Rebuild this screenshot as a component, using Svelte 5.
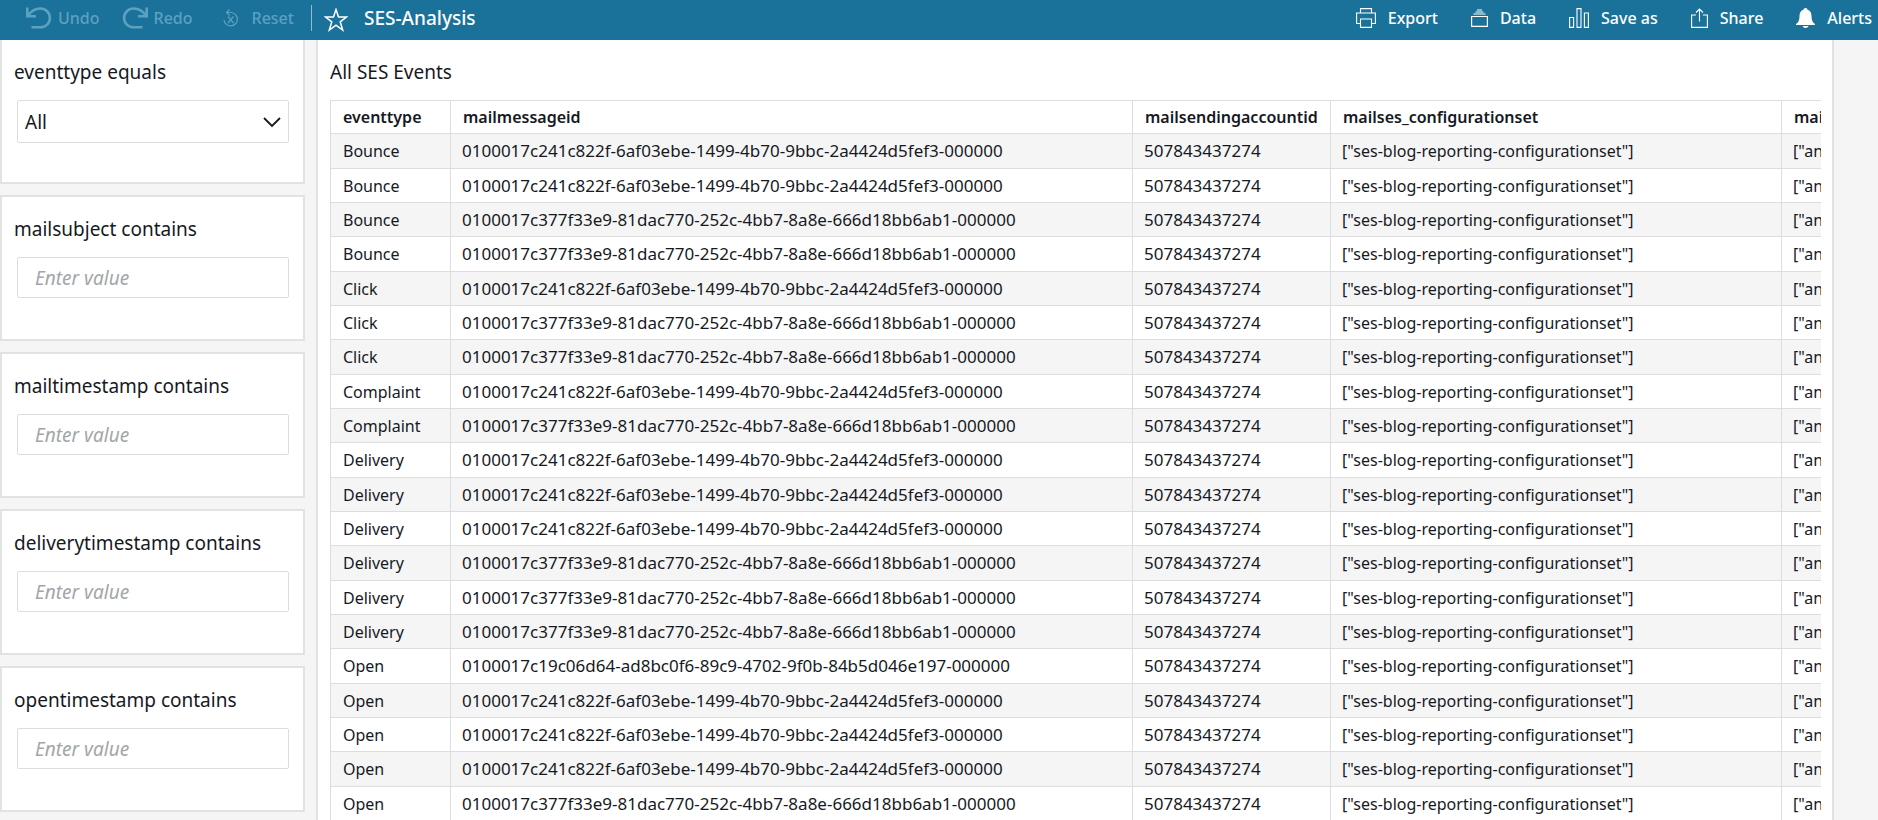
<script lang="ts">
  const filters = ['mailsubject', 'mailtimestamp', 'deliverytimestamp', 'opentimestamp'];

  const columns = [
    'eventtype',
    'mailmessageid',
    'mailsendingaccountid',
    'mailses_configurationset',
    'mailses_caller_identity',
  ];

  const ID_A = '0100017c241c822f-6af03ebe-1499-4b70-9bbc-2a4424d5fef3-000000';
  const ID_B = '0100017c377f33e9-81dac770-252c-4bb7-8a8e-666d18bb6ab1-000000';
  const ID_C = '0100017c19c06d64-ad8bc0f6-89c9-4702-9f0b-84b5d046e197-000000';

  const account = '507843437274';
  const configSet = '["ses-blog-reporting-configurationset"]';
  const caller = '["anonymous"]';

  const events: [string, string][] = [
    ['Bounce', ID_A],
    ['Bounce', ID_A],
    ['Bounce', ID_B],
    ['Bounce', ID_B],
    ['Click', ID_A],
    ['Click', ID_B],
    ['Click', ID_B],
    ['Complaint', ID_A],
    ['Complaint', ID_B],
    ['Delivery', ID_A],
    ['Delivery', ID_A],
    ['Delivery', ID_A],
    ['Delivery', ID_B],
    ['Delivery', ID_B],
    ['Delivery', ID_B],
    ['Open', ID_C],
    ['Open', ID_A],
    ['Open', ID_A],
    ['Open', ID_A],
    ['Open', ID_B],
  ];

  let eventType = $state('All');
  let values = $state<Record<string, string>>({});
  let starred = $state(false);
</script>

<div class="app">
  <!-- ── Toolbar ── -->
  <header class="toolbar">
    <div class="group history">
      <button class="tool" disabled>
        <svg width="26" height="22" viewBox="0 0 26 22" fill="none" stroke="currentColor" stroke-width="2.6">
          <path d="M1.300 .5v8.700H10M2 9C5 4 9 1.500 14.500 1.500a9.400 9.400 0 0 1 0 18.800H5.500" />
        </svg>
        Undo
      </button>
      <button class="tool" disabled>
        <svg width="26" height="22" viewBox="0 0 26 22" fill="none" stroke="currentColor" stroke-width="2.6">
          <path d="M24.700 .5v8.700H16M24 9C21 4 17 1.500 11.500 1.500a9.400 9.400 0 0 0 0 18.800h9" />
        </svg>
        Redo
      </button>
      <button class="tool reset" disabled>
        <svg width="16" height="18" viewBox="0 0 16 18" fill="none" stroke="currentColor" stroke-width="1.2">
          <path d="M6.500 .5L3.500 3.500l3 3M3.500 3.500H8a6.700 6.700 0 1 1-7 7.500M5 7.500l5.500 6.500M10.500 7.500L5 14" />
        </svg>
        Reset
      </button>
    </div>
    <div class="group title-group">
      <button class="star" aria-label="Favorite" aria-pressed={starred} onclick={() => (starred = !starred)}>
        <svg width="24" height="24" viewBox="0 0 24 24" fill={starred ? 'currentColor' : 'none'} stroke="currentColor" stroke-width="1.5">
          <path d="M12 1.500l2.500 7.500h8l-6.300 4.800 2.500 8.200L12 17.200 5.300 22l2.500-8.200L1.500 9h8z" />
        </svg>
      </button>
      <h1>SES-Analysis</h1>
    </div>
    <div class="group actions">
      <button class="tool">
        <svg width="20" height="20" viewBox="0 0 20 20" fill="none" stroke="currentColor" stroke-width="1.1">
          <path d="M4.500 5V.6h11V5M4.500 15.500H.6V5h18.800v10.500h-3.900M4.500 11h11v8.400h-11z" />
        </svg>
        Export
      </button>
      <button class="tool">
        <svg width="17" height="20" viewBox="0 0 17 20" fill="none" stroke="currentColor" stroke-width="1.2">
          <path d="M.6 8.500h15.800v9.900H.6zM2.500 6h12M4.500 4h8M6 2h5" />
        </svg>
        Data
      </button>
      <button class="tool">
        <svg width="20" height="20" viewBox="0 0 20 20" fill="none" stroke="currentColor" stroke-width="1.1">
          <path d="M.6 9.500h4v9.900h-4zM8 .6h4v18.800H8zM15.400 5h4v14.400h-4z" />
        </svg>
        Save as
      </button>
      <button class="tool">
        <svg width="17" height="20" viewBox="0 0 17 20" fill="none" stroke="currentColor" stroke-width="1.1">
          <path d="M5 7H.6v12.400h15.800V7H12M8.500 13.500V1M5 4.500L8.500 1 12 4.500" />
        </svg>
        Share
      </button>
      <button class="tool">
        <svg width="19" height="20" viewBox="0 0 19 20" fill="currentColor">
          <path d="M9.500 0c1.200 0 2 .8 2 1.700C14.200 2.500 15.500 4.800 15.500 8c0 4 1 6.500 3.500 8v1H0v-1c2.500-1.500 3.500-4 3.500-8 0-3.200 1.300-5.500 4-6.300C7.500.8 8.300 0 9.500 0zM6.500 18h6c-.5 1.300-1.500 2-3 2s-2.500-.7-3-2z" />
        </svg>
        Alerts
      </button>
    </div>
  </header>

  <div class="workspace">
    <!-- ── Filter controls ── -->
    <aside class="filters">
      <section class="card">
        <label for="f-eventtype">eventtype equals</label>
        <div class="select-wrap">
          <select id="f-eventtype" bind:value={eventType}>
            <option>All</option>
            <option>Bounce</option>
            <option>Click</option>
            <option>Complaint</option>
            <option>Delivery</option>
            <option>Open</option>
          </select>
          <svg class="chevron" width="18" height="11" viewBox="0 0 18 11" fill="none" stroke="currentColor" stroke-width="1.8">
            <path d="M1 1l8 8 8-8" />
          </svg>
        </div>
      </section>
      {#each filters as f}
        <section class="card">
          <label for="f-{f}">{f} contains</label>
          <input id="f-{f}" type="text" placeholder="Enter value" bind:value={values[f]} />
        </section>
      {/each}
    </aside>

    <!-- ── Events table ── -->
    <main class="visual">
      <h2>All SES Events</h2>
      <div class="table-clip">
        <table>
          <colgroup>
            <col class="c-type" />
            <col class="c-id" />
            <col class="c-account" />
            <col class="c-config" />
            <col class="c-last" />
          </colgroup>
          <thead>
            <tr>
              {#each columns as c}
                <th scope="col">{c}</th>
              {/each}
            </tr>
          </thead>
          <tbody>
            {#each events as [type, id]}
              <tr>
                <td>{type}</td>
                <td class="num">{id}</td>
                <td class="num">{account}</td>
                <td>{configSet}</td>
                <td>{caller}</td>
              </tr>
            {/each}
          </tbody>
        </table>
      </div>
    </main>
  </div>
</div>

<style>
  :global(body) {
    background: #f5f5f5;
  }

  .app {
    display: flex; flex-direction: column;
    height: 100vh; overflow: hidden;
    font-family: 'Noto Sans', 'Open Sans', sans-serif;
    font-size: 16px; color: #16191f;
  }

  button, input, select { font: inherit; color: inherit; }

  /* Toolbar */
  .toolbar {
    display: flex; align-items: center; flex-shrink: 0;
    height: 40px; padding: 0 6px 5px 26px; box-sizing: border-box;
    background: #1a729a; color: #fff;
  }
  .group { display: flex; align-items: center; }
  .history { gap: 22px; padding-right: 17px; }
  .tool {
    display: flex; align-items: center; gap: 12px;
    padding: 0; border: 0; background: none;
    font-size: 16px; line-height: 24px; font-weight: 500; white-space: nowrap;
  }
  .history .tool { gap: 6px; color: #5ba1c2; }
  .history .reset { gap: 13px; margin-left: 8px; }
  .title-group { gap: 16px; padding-left: 12px; border-left: 1px solid #8fbdd3; height: 26px; }
  .star { display: flex; padding: 4px 0 0; border: 0; background: none; }
  h1 { margin: 0; font-size: 19px; line-height: 28px; font-weight: 500; }
  .actions { gap: 33px; margin-left: auto; }

  /* Filters */
  .workspace { display: flex; flex: 1; min-height: 0; }
  .filters {
    display: flex; flex-direction: column; gap: 11px;
    width: 305px; flex-shrink: 0; margin-right: 11px;
  }
  .card {
    display: flex; flex-direction: column; flex-shrink: 0;
    height: 146px; padding: 18px 14px 0 12px; box-sizing: border-box;
    border: 2px solid #e2e2e2; background: #fff;
  }
  .card:first-child { height: 144px; border-top: 0; }
  .card label { font-size: 19px; line-height: 28px; margin-bottom: 14px; }
  .card input, .card select {
    width: 100%; box-sizing: border-box;
    border: 1px solid #ddd; border-radius: 2px; background: #fff; outline: none;
    font-size: 19px;
  }
  .card input { width: auto; height: 41px; margin-left: 3px; padding: 0 17px; }
  .card input::placeholder { color: #a3a6a9; font-style: italic; opacity: 1; }
  .card input:focus, .card select:focus { border-color: #1a729a; }
  .select-wrap { position: relative; margin-left: 3px; }
  .card select { appearance: none; height: 43px; padding: 0 36px 0 7px; }
  .chevron { position: absolute; right: 8px; top: 17px; pointer-events: none; }

  /* Table */
  .visual {
    flex: 1; min-width: 0; margin-right: 44px; padding: 18px 11px 0 12px;
    border: solid #e2e2e2; border-width: 0 2px; background: #fff;
  }
  h2 { margin: 0 0 14px; font-size: 19px; line-height: 28px; font-weight: 400; }
  .table-clip { overflow: hidden; }
  table {
    table-layout: fixed; width: 1700px;
    border-collapse: separate; border-spacing: 0;
    border-top: 1px solid #ddd; border-left: 1px solid #ddd;
  }
  .c-type { width: 120px; }
  .c-id { width: 682px; }
  .c-account { width: 198px; }
  .c-config { width: 451px; }
  th, td {
    height: 34px; padding: 0 0 0 11px; box-sizing: border-box;
    border-right: 1px solid #ddd; border-bottom: 1px solid #ddd;
    font-size: 16px; line-height: 24px; text-align: left; white-space: nowrap; overflow: hidden;
  }
  th { height: 33px; padding-left: 12px; font-weight: 600; }
  td:first-child { padding-left: 12px; }
  .num { font-size: 17px; }
  tbody tr:nth-child(odd) { background: #f5f5f5; }
  tbody tr:nth-child(3n + 1) td { height: 35px; }
</style>
